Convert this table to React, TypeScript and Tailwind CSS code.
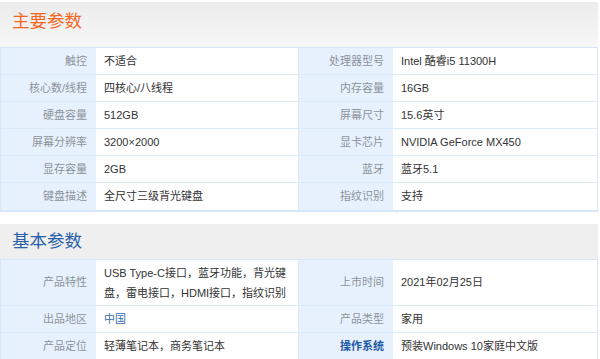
import React from "react";

const font = { fontFamily: '"Liberation Sans", Arial, "Noto Sans CJK SC", sans-serif' };

type Cell = { label: React.ReactNode; value: React.ReactNode; labelClass?: string; valueClass?: string };

function Row({ a, b, h = "h-[27px]", last = false }: { a: Cell; b: Cell; h?: string; last?: boolean }) {
  return (
    <div className={`grid grid-cols-[95px_203px_94px_1fr] ${h} ${last ? "" : "border-b border-[#dce9f8]"}`}>
      <div className={`bg-[#e7f1fd] flex items-center justify-end pr-[9px] text-[#8d939a] ${a.labelClass ?? ""}`}>{a.label}</div>
      <div className={`bg-white flex items-center pl-[8px] text-[#333] border-r border-[#dce9f8] ${a.valueClass ?? ""}`}>{a.value}</div>
      <div className={`bg-[#e7f1fd] flex items-center justify-end pr-[9px] text-[#8d939a] ${b.labelClass ?? ""}`}>{b.label}</div>
      <div className={`bg-white flex items-center pl-[8px] text-[#333] ${b.valueClass ?? ""}`}>{b.value}</div>
    </div>
  );
}

export default function App() {
  return (
    <div className="w-[600px] h-[359px] bg-white overflow-hidden text-[11px]" style={font}>
      <div className="w-[598px]">
        <div className="mt-[2px] h-[45px] bg-gradient-to-b from-[#ececec] to-[#f7f7f7] flex items-center pl-[12px] pb-[6px]">
          <span className="text-[17.5px] text-[#f4661b] leading-none" style={font}>主要参数</span>
        </div>
        <div className="border border-[#d6e5f7] border-b-[2px]">
          <Row a={{ label: "触控", value: "不适合" }} b={{ label: "处理器型号", value: "Intel 酷睿i5 11300H" }} />
          <Row a={{ label: "核心数/线程", value: "四核心/八线程" }} b={{ label: "内存容量", value: "16GB" }} />
          <Row a={{ label: "硬盘容量", value: "512GB" }} b={{ label: "屏幕尺寸", value: "15.6英寸" }} />
          <Row a={{ label: "屏幕分辨率", value: "3200×2000" }} b={{ label: "显卡芯片", value: "NVIDIA GeForce MX450" }} />
          <Row a={{ label: "显存容量", value: "2GB" }} b={{ label: "蓝牙", value: "蓝牙5.1" }} />
          <Row a={{ label: "键盘描述", value: "全尺寸三级背光键盘" }} b={{ label: "指纹识别", value: "支持" }} last />
        </div>
        <div className="h-[12px]" />
        <div className="h-[35px] bg-[#efefef] flex items-center pl-[12px]">
          <span className="text-[17.5px] text-[#2560a8] leading-none" style={font}>基本参数</span>
        </div>
        <div className="border border-[#d6e5f7]">
          <Row
            h="h-[46px]"
            a={{
              label: "产品特性",
              value: (
                <div className="leading-[20px]">
                  <div className="whitespace-nowrap">USB Type-C接口，蓝牙功能，背光键</div>
                  <div className="whitespace-nowrap">盘，雷电接口，HDMI接口，指纹识别</div>
                </div>
              ),
            }}
            b={{ label: "上市时间", value: "2021年02月25日" }}
          />
          <Row a={{ label: "出品地区", value: "中国", valueClass: "!text-[#3a6fb0]" }} b={{ label: "产品类型", value: "家用" }} />
          <Row
            a={{ label: "产品定位", value: "轻薄笔记本，商务笔记本" }}
            b={{ label: "操作系统", value: "预装Windows 10家庭中文版", labelClass: "!text-[#1f5aa6] font-bold" }}
            last
          />
        </div>
      </div>
    </div>
  );
}
